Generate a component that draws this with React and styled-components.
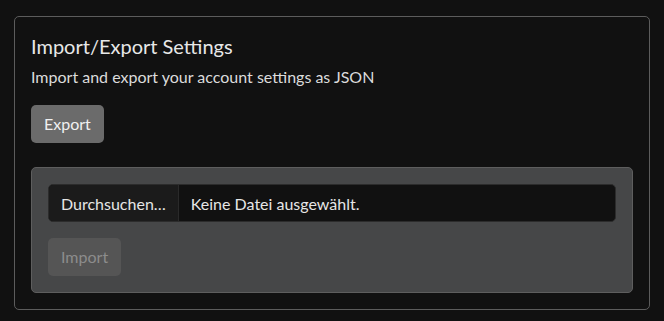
import React from 'react';
import styled, { createGlobalStyle } from 'styled-components';

const GlobalStyle = createGlobalStyle`
  html, body {
    margin: 0;
    background: #111111;
    font-family: Lato, "Open Sans", sans-serif;
    color: #e6e6e6;
  }
`;

const Page = styled.div`
  padding: 16px 14px;
`;

const Card = styled.section`
  border: 1px solid #5c5c5c;
  border-radius: 5px;
  padding: 16px;
  display: flex;
  flex-direction: column;
`;

const Title = styled.h2`
  margin: 0;
  font-size: 20px;
  font-weight: 400;
  line-height: 26px;
  color: #e8e8e8;
`;

const Subtitle = styled.p`
  margin: 6px 0 16px;
  font-size: 16px;
  line-height: 24px;
  color: #dcdcdc;
`;

const Button = styled.button`
  align-self: flex-start;
  font-family: inherit;
  font-size: 16px;
  line-height: 22px;
  padding: 8px 13px;
  border: 0;
  border-radius: 5px;
  background: ${(p) => (p.disabled ? '#555555' : '#6b6b6b')};
  color: ${(p) => (p.disabled ? '#8c8c8c' : '#f0f0f0')};
  cursor: ${(p) => (p.disabled ? 'default' : 'pointer')};
`;

const Panel = styled.div`
  margin-top: 24px;
  background: #464748;
  border: 1px solid #5e5e5e;
  border-radius: 5px;
  padding: 16px;
  display: flex;
  flex-direction: column;
  gap: 16px;
`;

const FileField = styled.label`
  display: flex;
  height: 38px;
  box-sizing: border-box;
  background: #111111;
  border: 1px solid #2c2c2c;
  border-radius: 5px;
  overflow: hidden;
  font-size: 16px;
  color: #e6e6e6;
`;

const FileButton = styled.span`
  display: flex;
  align-items: center;
  padding: 0 12px;
  background: #1b1b1b;
  border-right: 1px solid #2a2a2a;
`;

const FileName = styled.span`
  display: flex;
  align-items: center;
  padding: 0 12px;
`;

const App = () => (
  <>
    <GlobalStyle />
    <Page>
      <Card>
        <Title>Import/Export Settings</Title>
        <Subtitle>Import and export your account settings as JSON</Subtitle>
        <Button type="button">Export</Button>
        <Panel>
          <FileField>
            <FileButton>Durchsuchen…</FileButton>
            <FileName>Keine Datei ausgewählt.</FileName>
          </FileField>
          <Button type="button" disabled>Import</Button>
        </Panel>
      </Card>
    </Page>
  </>
);

export default App;
